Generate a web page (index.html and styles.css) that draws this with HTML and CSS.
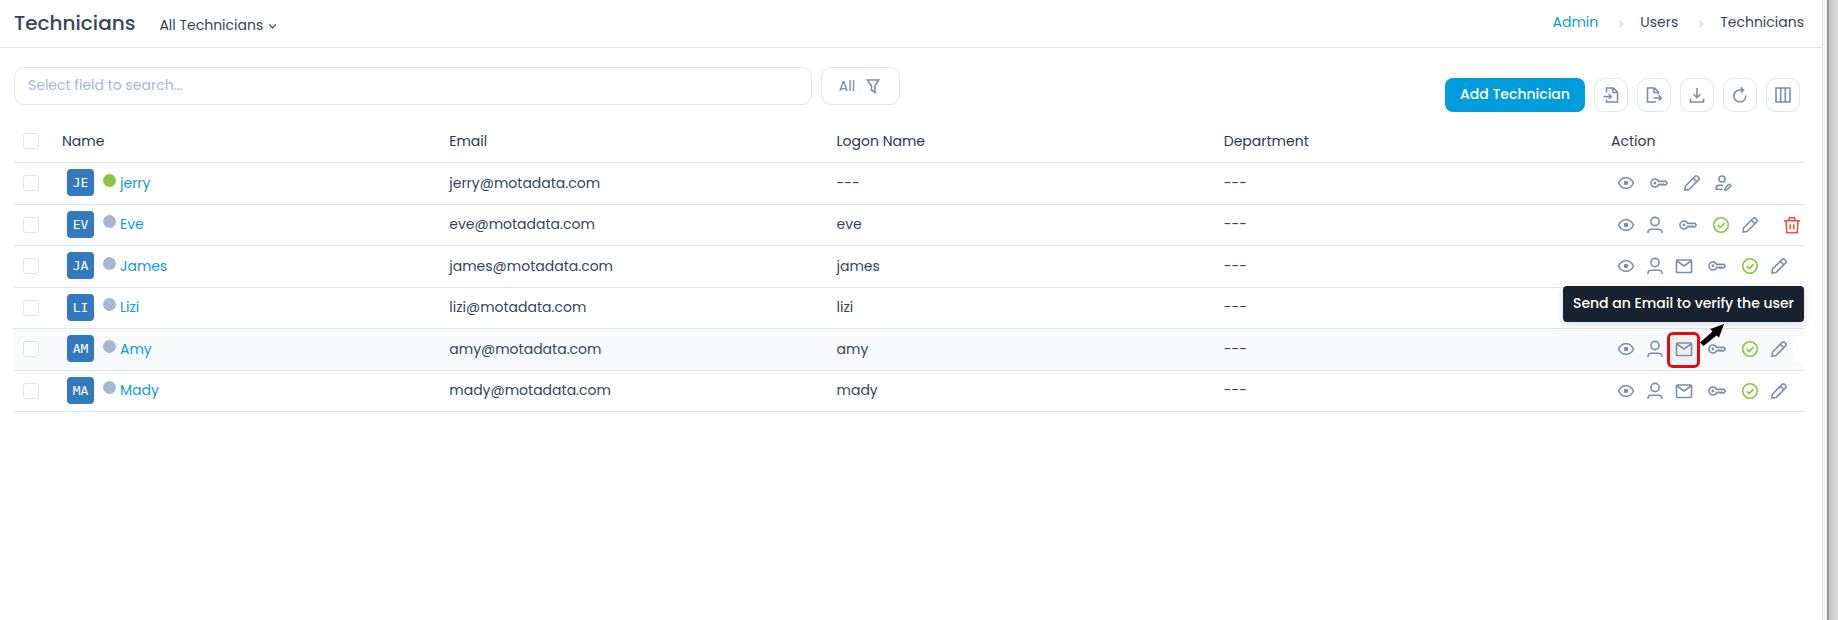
FILE: index.html
```html
<!DOCTYPE html>
<html lang="en">
<head>
    <meta charset="UTF-8">
    <meta name="viewport" content="width=device-width, initial-scale=1.0">
    <title>Technicians</title>
    <link rel="stylesheet" href="styles.css">
</head>
<body>

    <!-- Icon sprite -->
    <svg class="sprite" aria-hidden="true">
        <symbol id="eye" viewBox="0 0 18 18">
            <path d="M1.500 9C3.200 5.400 6 3.700 9 3.700s5.800 1.700 7.500 5.300c-1.700 3.600-4.500 5.300-7.500 5.300S3.200 12.600 1.500 9z"/>
            <circle class="solid" cx="9" cy="9" r="2.300"/>
        </symbol>
        <symbol id="user" viewBox="0 0 18 18">
            <circle cx="9" cy="5.500" r="4.100"/>
            <path d="M2 17v-.6c0-2.200 1.400-3.200 3.400-3.200h7.200c2 0 3.400 1 3.400 3.200v.6"/>
        </symbol>
        <symbol id="mail" viewBox="0 0 18 18">
            <rect x="1.500" y="3" width="15" height="12.500" rx="0.800"/>
            <path d="M2 4l7 5 7-5"/>
        </symbol>
        <symbol id="key" viewBox="0 0 18 18">
            <path d="M8.600 7.400A4 4 0 1 0 8.600 10.600H10l1-.5 1.200.9 1.200-.9 1 .9h1.400l1.400-1.800-1.200-1.800z"/>
            <circle class="solid" cx="4.900" cy="9" r="1.400"/>
        </symbol>
        <symbol id="check" viewBox="0 0 18 18">
            <circle cx="9" cy="9" r="7.300"/>
            <path d="M5.700 9.200l2.400 2.300 4.300-4.400"/>
        </symbol>
        <symbol id="pencil" viewBox="0 0 18 18">
            <path d="M2 16l.5-4L12 2.500c.9-.9 1.800-.9 2.700 0l.8.800c.9.900.9 1.800 0 2.700L6 15.500z"/>
            <path d="M10.300 4.200l3.500 3.500"/>
        </symbol>
        <symbol id="user-edit" viewBox="0 0 18 18">
            <circle cx="8" cy="5" r="3"/>
            <path d="M8.500 15.300H2.200v-1.200c0-1.700 1-2.700 2.600-2.700H9"/>
            <path d="M11 16l.3-2 3.500-3.500c.8-.8 2.600.9 1.800 1.800L13 15.700z"/>
        </symbol>
        <symbol id="trash" viewBox="0 0 18 18">
            <path d="M1 4.700h16M5.700 4.500l.9-2.700h4.800l.9 2.700M3 5l.8 11.700h10.400L15 5M7.300 8.300v5M10.700 8.300v5"/>
        </symbol>
        <symbol id="filter" viewBox="0 0 18 18">
            <path d="M3.500 3h11L11 9v6.500L7.500 13V9z"/>
        </symbol>
        <symbol id="import" viewBox="0 0 18 18">
            <path d="M4.500 6.500V2h7l4 4v10h-11v-2.500M11 2.300V6.500h4.300M1.500 10.500h7.500M6.800 8l2.500 2.500L6.800 13"/>
        </symbol>
        <symbol id="export" viewBox="0 0 18 18">
            <path d="M13.500 8.500V6l-4-4h-7v14h8.500M9 2.300V6.500h4.300M8.500 12H16M13.800 9.500l2.500 2.500-2.500 2.500"/>
        </symbol>
        <symbol id="download" viewBox="0 0 18 18">
            <path d="M9 2v9.500M5.600 8.300L9 11.700l3.400-3.400M2.500 12.500V16h13v-3.500"/>
        </symbol>
        <symbol id="refresh" viewBox="0 0 18 18">
            <path d="M14.800 9.500a6 6 0 1 1-6-5.500H12M9.800 1.400L12.400 4 9.800 6.600"/>
        </symbol>
        <symbol id="columns" viewBox="0 0 18 18">
            <path d="M2 2h14v14H2zM6.700 2v14M11.300 2v14"/>
        </symbol>
    </svg>

    <div class="page">
        <header class="header">
            <h1 class="title">Technicians</h1>
            <button class="view-switch">
                All Technicians
                <svg class="caret" viewBox="0 0 8 6"><path d="M1 1.200l3 3 3-3"/></svg>
            </button>
            <nav class="breadcrumb" aria-label="Breadcrumb">
                <a class="crumb link" href="#">Admin</a>
                <svg class="crumb-sep" viewBox="0 0 6 8"><path d="M1.500 1l3 3-3 3"/></svg>
                <span class="crumb">Users</span>
                <svg class="crumb-sep" viewBox="0 0 6 8"><path d="M1.500 1l3 3-3 3"/></svg>
                <span class="crumb">Technicians</span>
            </nav>
        </header>

        <main class="content">
            <div class="toolbar">
                <div class="search">
                    <input class="search-input" type="text" placeholder="Select field to search..." aria-label="Search technicians">
                    <button class="filter">All <svg class="icon"><use href="#filter"/></svg></button>
                </div>
                <div class="tools">
                    <button class="add">Add Technician</button>
                    <button class="tool" aria-label="Import"><svg class="icon"><use href="#import"/></svg></button>
                    <button class="tool" aria-label="Export"><svg class="icon"><use href="#export"/></svg></button>
                    <button class="tool" aria-label="Download"><svg class="icon"><use href="#download"/></svg></button>
                    <button class="tool" aria-label="Refresh"><svg class="icon"><use href="#refresh"/></svg></button>
                    <button class="tool" aria-label="Columns"><svg class="icon"><use href="#columns"/></svg></button>
                </div>
            </div>

            <table class="grid">
                <colgroup>
                    <col class="col-check">
                    <col><col><col><col>
                    <col class="col-action">
                </colgroup>
                <thead>
                    <tr>
                        <th class="check-cell"><input class="check" type="checkbox" aria-label="Select all"></th>
                        <th>Name</th>
                        <th>Email</th>
                        <th>Logon Name</th>
                        <th>Department</th>
                        <th>Action</th>
                    </tr>
                </thead>
                <tbody id="rows"></tbody>
            </table>
        </main>
    </div>
    <div class="window-edge"></div>

    <script src="script.js"></script>
</body>
</html>
```

FILE: styles.css
```css
* {
    box-sizing: border-box;
}

body {
    margin: 0;
    min-height: 100vh;
    display: flex;
    background-color: #fff;
    color: #364658;
    font-family: Poppins, Inter, sans-serif;
    font-size: 14px;
    line-height: 20px;
}

button,
input {
    font: inherit;
    color: inherit;
}

button {
    padding: 0;
    border: none;
    background: none;
    cursor: pointer;
}

svg {
    fill: none;
    stroke: currentColor;
    stroke-width: 1.6;
}

.sprite {
    display: none;
}

.solid {
    fill: currentColor;
    stroke: none;
}

.icon {
    width: 18px;
    height: 18px;
    flex: none;
}

.page {
    flex: 1;
    min-width: 0;
}

/* Right edge of the window with its shadow */
.window-edge {
    width: 16px;
    border-left: 1px solid #e0e0e0;
    background: linear-gradient(to right, #f6f6f6 4px, #999 4px, #999 6px, #c4c4c4 6px, #dadada 15px);
}

.header {
    display: flex;
    align-items: center;
    height: 48px;
    padding: 0 18px 2px 14px;
    border-bottom: 1px solid #dfe5ef;
}

.title {
    margin: 0 24px 0 0;
    font-size: 20px;
    font-weight: 500;
}

.view-switch {
    display: flex;
    align-items: center;
    gap: 5px;
    padding-top: 5px;
}

.caret {
    width: 9px;
    height: 7px;
    margin-top: 3px;
    stroke-width: 1;
}

.breadcrumb {
    display: flex;
    align-items: center;
    gap: 16px;
    margin-left: auto;
    padding-bottom: 2px;
}

.crumb-sep {
    width: 6px;
    height: 8px;
    margin: 4px 0 0 4px;
    color: #a5bad0;
    stroke-width: 1;
}

.link {
    color: #099dd9;
    text-decoration: none;
}

.content {
    padding: 19px 18px 0 14px;
}

.toolbar {
    display: flex;
    justify-content: space-between;
}

.search {
    display: flex;
    gap: 9px;
    flex: 0 1 886px;
}

.search-input,
.filter,
.tool {
    border: 1px solid #dfe5ef;
    border-radius: 10px;
    background-color: #fff;
}

.search-input {
    flex: 1;
    min-width: 0;
    height: 38px;
    padding: 0 13px 2px;
}

.search-input::placeholder {
    color: #a5bad0;
    opacity: 1;
}

.filter {
    display: flex;
    align-items: center;
    justify-content: center;
    gap: 9px;
    width: 79px;
    height: 38px;
    color: #7b8fa5;
}

.tools {
    display: flex;
    gap: 9px;
    padding: 11px 4px 0 0;
}

.add {
    width: 140px;
    height: 34px;
    padding-bottom: 2px;
    border-radius: 8px;
    background-color: #009ddc;
    color: #fff;
    font-weight: 500;
}

.tool {
    display: flex;
    align-items: center;
    justify-content: center;
    width: 34px;
    height: 34px;
    color: #7b8fa5;
}

.grid {
    width: 100%;
    margin-top: 8px;
    table-layout: fixed;
    border-collapse: collapse;
}

.col-check {
    width: 48px;
}

.col-action {
    width: 193px;
}

.grid th,
.grid td {
    height: 42px;
    padding: 0 0 1px;
    border-bottom: 1px solid #dfe5ef;
    text-align: left;
    font-weight: 400;
}

.grid th {
    padding: 1px 0 0;
    color: #2b3a4d;
}

.grid tbody tr:nth-child(even) td {
    height: 41px;
}

.grid th.check-cell,
.grid td.check-cell {
    padding: 0 0 0 9px;
}

.hovered {
    background-color: #f8fafc;
}

.check {
    display: block;
    appearance: none;
    width: 16px;
    height: 16px;
    margin: 0;
    border: 1px solid #dfe5ef;
    border-radius: 3px;
    background-color: #fff;
}

.check:checked {
    background-color: #099dd9;
}

.name {
    display: flex;
    align-items: center;
    padding-left: 5px;
}

.avatar {
    width: 27px;
    margin-right: 9px;
    border-radius: 4px;
    background-color: #3279be;
    color: #fff;
    font-family: "DejaVu Sans Mono", monospace;
    font-size: 13px;
    line-height: 27px;
    text-align: center;
}

.status {
    width: 13px;
    height: 13px;
    margin: 0 4px 5px 0;
    border-radius: 50%;
    background-color: #a5b8d1;
}

.status.online {
    background-color: #89c540;
}

.actions {
    display: flex;
    align-items: center;
    padding-top: 1px;
}

.action {
    position: relative;
    display: flex;
    align-items: center;
    justify-content: center;
    flex: none;
    width: 29px;
    height: 27px;
    color: #7b8fa5;
}

.action.key {
    width: 37px;
}

.action.user-edit {
    width: 33px;
}

.action.check-on {
    color: #89c540;
}

.action.trash {
    width: 24px;
    margin-left: auto;
    color: #f04e3e;
}

.action.active {
    border-radius: 6px;
    background-color: #edf1f6;
}

.action-blank {
    flex: 1;
    height: 27px;
    border-radius: 8px 0 0 8px;
    background-color: #fff;
}

/* Callout around the verify email button */
.marker {
    position: absolute;
    top: -4px;
    left: -2px;
    width: 33px;
    height: 36px;
    border: 3px solid #e60a0f;
    border-radius: 6px;
}

.arrow {
    position: absolute;
    top: -12px;
    left: 31px;
    width: 24px;
    height: 22px;
    color: #000;
}

.tooltip {
    position: absolute;
    right: -106px;
    bottom: 41px;
    padding: 7px 10px 9px;
    border-radius: 4px;
    background-color: #16222f;
    box-shadow: 0 2px 8px rgba(0, 0, 0, 0.15);
    color: #fff;
    font-weight: 500;
    white-space: nowrap;
}
```

FILE: script.js
```js
const technicians = [
    { name: 'jerry', logon: '---', online: true, actions: ['eye', 'key', 'pencil', 'user-edit'] },
    { name: 'Eve', logon: 'eve', actions: ['eye', 'user', 'key', 'check', 'pencil', 'trash'] },
    { name: 'James', logon: 'james', actions: ['eye', 'user', 'mail', 'key', 'check', 'pencil'] },
    { name: 'Lizi', logon: 'lizi', actions: ['eye', 'user', 'mail', 'key', 'check', 'pencil'] },
    { name: 'Amy', logon: 'amy', hovered: true, actions: ['eye', 'user', 'mail', 'key', 'check', 'pencil'] },
    { name: 'Mady', logon: 'mady', actions: ['eye', 'user', 'mail', 'key', 'check', 'pencil'] }
];

const labels = {
    'eye': 'View',
    'user': 'Profile',
    'mail': 'Verify email',
    'key': 'Reset password',
    'check': 'Active',
    'pencil': 'Edit',
    'user-edit': 'Edit profile',
    'trash': 'Delete'
};

const callout = `
    <span class="marker"></span>
    <svg class="arrow" viewBox="0 0 24 22">
        <path class="solid" d="M0 18.500L12.500 7.500 10.300 5 24 0 19 13.500 16.500 11.500 3.500 22z"/>
    </svg>
    <span class="tooltip" role="tooltip">Send an Email to verify the user</span>`;

// Function to build one action button
function actionButton(icon, hovered) {
    const active = hovered && icon === 'mail';
    const style = icon === 'check' ? 'check-on' : icon;
    return `<button class="action ${style}${active ? ' active' : ''}" aria-label="${labels[icon]}">
        <svg class="icon"><use href="#${icon}"/></svg>${active ? callout : ''}
    </button>`;
}

// Function to build one table row
function row(tech) {
    return `<tr class="${tech.hovered ? 'hovered' : ''}">
        <td class="check-cell"><input class="check" type="checkbox" aria-label="Select ${tech.name}"></td>
        <td>
            <div class="name">
                <span class="avatar">${tech.name.slice(0, 2).toUpperCase()}</span>
                <span class="status${tech.online ? ' online' : ''}"></span>
                <a class="link" href="#">${tech.name}</a>
            </div>
        </td>
        <td>${tech.name.toLowerCase()}@motadata.com</td>
        <td>${tech.logon}</td>
        <td>---</td>
        <td>
            <div class="actions">
                ${tech.actions.map(icon => actionButton(icon, tech.hovered)).join('')}
                ${tech.hovered ? '<span class="action-blank"></span>' : ''}
            </div>
        </td>
    </tr>`;
}

document.getElementById('rows').innerHTML = technicians.map(row).join('');
```
